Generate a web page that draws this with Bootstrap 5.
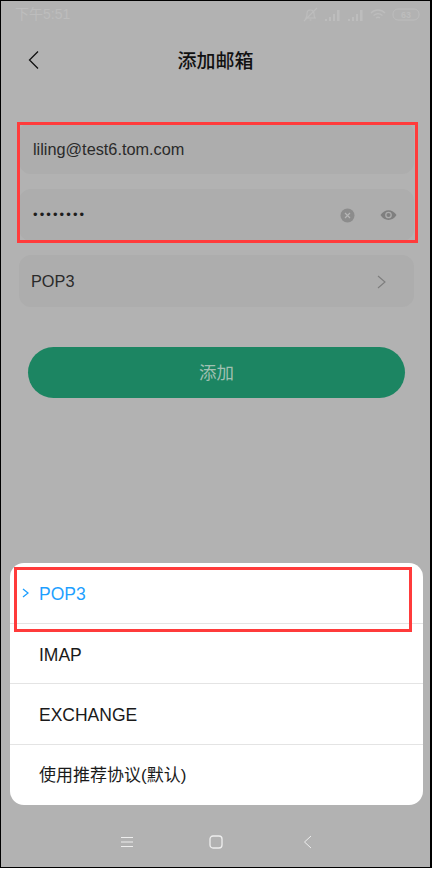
<!DOCTYPE html>
<html lang="zh-CN">
<head>
  <meta charset="UTF-8"/>
  <meta name="viewport" content="width=device-width, initial-scale=1"/>
  <title>添加邮箱</title>
  <link href="https://cdn.jsdelivr.net/npm/bootstrap@5.3.0/dist/css/bootstrap.min.css" rel="stylesheet"/>
  <style>
    body { background: #fff; font-family: "Liberation Sans", "Noto Sans CJK SC", sans-serif; }
    .phone { width: 432px; height: 868px; border: 1px solid #000; border-right-width: 2px; background: #b2b2b2; position: relative; overflow: hidden; }
    .status-row { height: 29px; padding: 0 10px 2px 14px; color: #bdbdbd; font-size: 14px; }
    .status-row svg { display: block; }
    .status-icons { gap: 6px; }
    .top-row { height: 60px; position: relative; }
    .top-row h1 { font-size: 19px; font-weight: 500; color: #111; margin: 0; font-family: "Noto Sans CJK SC", sans-serif; }
    .back-btn { position: absolute; left: 27px; top: 21px; }
    .field-box { height: 52px; width: 395px; margin: 0 0 0 18px; padding: 0 14px; background: #adadad; border-radius: 12px; font-size: 16.3px; color: #2a2a2a; }
    .field-one { margin-top: 32px; padding-top: 3px; }
    .field-two { margin-top: 15px; padding-right: 17px; }
    .field-three { margin-top: 14px; padding: 1px 12px 0; }
    .pwd-dots { font-size: 13px; letter-spacing: 2.100px; color: #1d1d1d; }
    .pwd-tools { gap: 25px; }
    .add-btn { display: block; width: 377px; height: 51px; margin: 40px 0 0 27px; padding: 0; border: 0; border-radius: 26px; background: #1c8562; color: #a0c0b2; font-size: 17.5px; font-family: "Noto Sans CJK SC", sans-serif; }
    .sheet { width: 413px; margin: auto 0 0 9px; background: #fff; border-radius: 14px; overflow: hidden; }
    .sheet-row { height: 60.5px; padding: 3px 0 0 29px; font-size: 17.5px; color: #1a1a1a; position: relative; border-bottom: 1px solid #e4e4e4; }
    .sheet-row:last-child { border-bottom: 0; padding-top: 1px; font-size: 17px; }
    .sheet-row.on { color: #1e9fff; }
    .sheet-row.on svg { position: absolute; left: 12px; top: 25px; }
    .softkeys { height: 62px; padding: 12px 0 0 1px; gap: 75px; }
    .softkeys .key-back { margin-left: 5px; }
    .red-mark { position: absolute; border: 3px solid #ff3b3b; pointer-events: none; }
    .mark-fields { left: 16px; top: 121px; width: 401px; height: 121px; }
    .mark-option { left: 13px; top: 566px; width: 398px; height: 65px; }
  </style>
</head>
<body class="m-0">
  <div class="phone d-flex flex-column">
    <div class="status-row d-flex align-items-center justify-content-between">
      <span>下午5:51</span>
      <span class="status-icons d-flex align-items-center">
        <svg width="15" height="15" viewBox="0 0 15 15" fill="none" stroke="#bdbdbd" stroke-width="1.200"><path d="M3 11c1-1 1-2.500 1-4.500a3.500 3.500 0 0 1 7 0c0 2 0 3.500 1 4.500zM1 14 14 1M6.500 13h2"/></svg>
        <svg width="17" height="12" viewBox="0 0 17 12" fill="#bdbdbd"><path d="M1 10h2v2H1zM5 8h2v4H5zM9 5h2v7H9zM13 1h2.500v11H13z"/></svg>
        <svg width="17" height="12" viewBox="0 0 17 12" fill="#bdbdbd"><path d="M1 10h2v2H1zM5 8h2v4H5zM9 5h2v7H9zM13 1h2.500v11H13z"/></svg>
        <svg width="16" height="12" viewBox="0 0 16 12" fill="none" stroke="#bdbdbd" stroke-width="1.400"><path d="M1 4c4-4 10-4 14 0M3.500 6.500c3-2.500 6-2.500 9 0M6 9c1.500-1 2.500-1 4 0"/></svg>
        <svg width="28" height="13" viewBox="0 0 28 13"><rect x="1" y="1" width="26" height="11" rx="5" fill="none" stroke="#bdbdbd"/><text x="14" y="10" font-size="9" font-weight="700" text-anchor="middle" fill="#bdbdbd" font-family="Liberation Sans">63</text></svg>
      </span>
    </div>
    <div class="top-row d-flex align-items-center justify-content-center">
      <svg class="back-btn" width="11" height="18" viewBox="0 0 11 18" fill="none" stroke="#111" stroke-width="1.300"><path d="M10 .500 1.500 9l8.500 8.500"/></svg>
      <h1>添加邮箱</h1>
    </div>
    <div class="field-box field-one d-flex align-items-center">liling@test6.tom.com</div>
    <div class="field-box field-two d-flex align-items-center justify-content-between">
      <span class="pwd-dots">••••••••</span>
      <span class="pwd-tools d-flex align-items-center">
        <svg width="15" height="15" viewBox="0 0 15 15"><circle cx="7.500" cy="7.500" r="7" fill="#8c8c8c"/><path d="M5 5l5 5M10 5l-5 5" stroke="#b5b5b5" stroke-width="1.200"/></svg>
        <svg width="17" height="12" viewBox="0 0 17 12"><path d="M.5 6c4-6.500 12-6.500 16 0-4 6.500-12 6.500-16 0z" fill="#7f7f7f"/><circle cx="8.500" cy="6" r="2.700" fill="none" stroke="#adadad" stroke-width="1.300"/></svg>
      </span>
    </div>
    <div class="field-box field-three d-flex align-items-center justify-content-between">
      <span>POP3</span>
      <svg class="me-3" width="9" height="14" viewBox="0 0 9 14" fill="none" stroke="#7d7d7d" stroke-width="1.100"><path d="M1 1l7 6-7 6"/></svg>
    </div>
    <button class="add-btn" type="button">添加</button>
    <div class="sheet">
      <div class="sheet-row on d-flex align-items-center">
        <svg width="7" height="10" viewBox="0 0 7 10" fill="none" stroke="#1e9fff" stroke-width="1.300"><path d="M1 1l5 4-5 4"/></svg>
        POP3
      </div>
      <div class="sheet-row d-flex align-items-center">IMAP</div>
      <div class="sheet-row d-flex align-items-center">EXCHANGE</div>
      <div class="sheet-row d-flex align-items-center">使用推荐协议(默认)</div>
    </div>
    <div class="softkeys d-flex align-items-center justify-content-center">
      <svg width="14" height="12" viewBox="0 0 14 12" stroke="#eee" stroke-width="1"><path d="M1 1.500h12M1 6h12M1 10.500h12"/></svg>
      <svg width="14" height="14" viewBox="0 0 14 14" fill="none" stroke="#eee" stroke-width="1.300"><rect x="1" y="1" width="12" height="12" rx="3"/></svg>
      <svg class="key-back" width="9" height="14" viewBox="0 0 9 14" fill="none" stroke="#eee" stroke-width="1"><path d="M8 1 1.500 7 8 13"/></svg>
    </div>
    <div class="red-mark mark-fields"></div>
    <div class="red-mark mark-option"></div>
  </div>
  <script src="https://cdn.jsdelivr.net/npm/bootstrap@5.3.0/dist/js/bootstrap.bundle.min.js"></script>
</body>
</html>
